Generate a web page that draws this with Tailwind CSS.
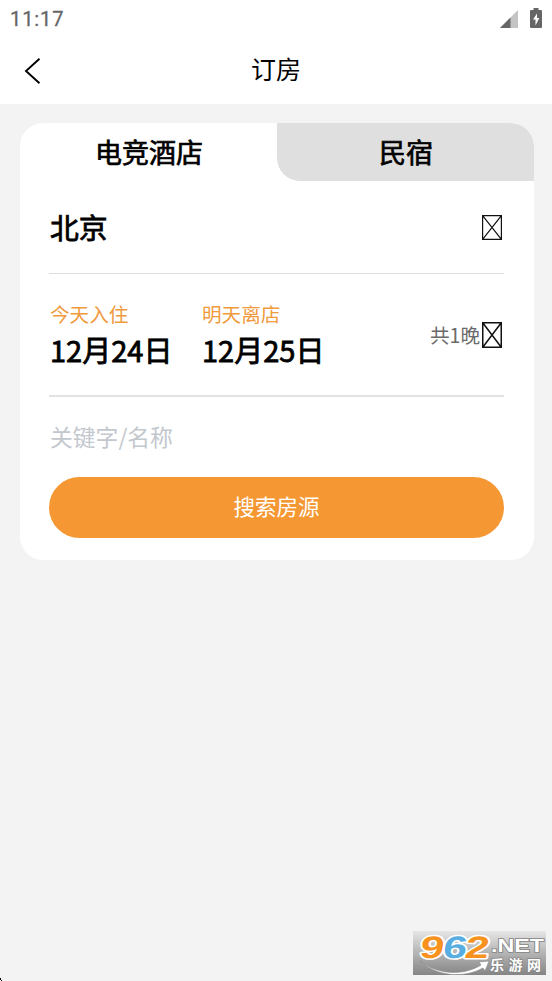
<!DOCTYPE html>
<html lang="zh-CN">
<head>
<meta charset="utf-8">
<title>订房</title>
<script src="https://cdn.jsdelivr.net/npm/@tailwindcss/browser@4"></script>
</head>
<body class="relative h-[981px] w-[552px] overflow-hidden bg-[#f3f3f3] font-['Noto_Sans_CJK_SC',sans-serif] text-black">
<header class="h-[104px] bg-white">
  <div class="flex h-[38px] items-center justify-between pl-[10px] pr-[10px]">
    <span class="font-['Roboto',sans-serif] text-[20px] font-normal tracking-[0.9px] text-[#666] [-webkit-text-stroke:0.3px_#666]">11:17</span>
    <div class="flex items-center gap-3">
      <svg class="-mt-[1px] h-[18px] w-[18px]" viewBox="0 0 18 18"><path d="M18 0V18H0Z" fill="#c4c4c4"/><path d="M10.500 7.500V18H0Z" fill="#666"/></svg>
      <svg class="-mt-[2px] h-[20px] w-[12px]" viewBox="0 0 12 20"><path d="M3.500 0h5v2H11a1 1 0 0 1 1 1v16a1 1 0 0 1-1 1H1a1 1 0 0 1-1-1V3a1 1 0 0 1 1-1h2.500Z" fill="#666"/><path d="M7 5.500 3 11.500H5.500V17.500L9.300 10H7Z" fill="#fff"/></svg>
    </div>
  </div>
  <div class="grid h-[63px] grid-cols-[40px_1fr_40px] items-center">
    <svg class="ml-6 mt-[3px] h-[28px] w-[18px]" viewBox="0 0 18 28" fill="none" stroke="#000" stroke-width="1.900"><path d="M15.500 1.700 2 14 15.500 26.300"/></svg>
    <h1 class="pb-[3px] text-center text-[25px] leading-[60px]">订房</h1>
  </div>
</header>
<main class="ml-5 mt-[19px] h-[437px] w-[514px] overflow-hidden rounded-[23px] bg-white">
  <div class="grid h-[58px] grid-cols-2 text-center text-[27px] leading-[57px] [-webkit-text-stroke:0.7px_#000]">
    <div class="pl-[1px]">电竞酒店</div>
    <div class="rounded-bl-[23px] rounded-tr-[23px] bg-[#dfdfdf] pl-[1px]">民宿</div>
  </div>
  <div class="pl-[29px] pr-[30px]">
    <div class="flex h-[93px] items-center justify-between border-b border-[#dfdfdf]">
      <span class="pb-[2px] pl-[1px] text-[28.8px] leading-[29px] [-webkit-text-stroke:0.8px_#000]">北京</span>
      <svg class="mr-[2px] h-[25px] w-[20px]" viewBox="0 0 20 25" fill="none" stroke="#111"><path stroke-width="1.200" d="M.6.600h18.800v23.800H.6ZM.6.600l18.800 23.800M19.400.600l-18.800 23.800"/></svg>
    </div>
    <div class="flex h-[123px] items-center border-b-2 border-[#e2e2e2] pl-[1px]">
      <div class="w-[152px] pb-[2px]">
        <div class="text-[19.6px] leading-[31px] text-[#f09a3e]">今天入住</div>
        <div class="text-[29px] leading-[40px] [-webkit-text-stroke:0.8px_#000]">12月24日</div>
      </div>
      <div class="pb-[2px]">
        <div class="text-[19.6px] leading-[31px] text-[#f09a3e]">明天离店</div>
        <div class="text-[29px] leading-[40px] [-webkit-text-stroke:0.8px_#000]">12月25日</div>
      </div>
      <div class="ml-auto flex items-center gap-[2px] pt-[1px]">
        <span class="text-[19.6px] leading-[24px] text-[#6b6b6b]">共1晚</span>
        <svg class="mr-[2px] h-[26px] w-[20px]" viewBox="0 0 20 26" fill="none" stroke="#111"><path stroke-width="1.500" d="M.75.750h18.500v24.500H.75ZM.75.750l18.500 24.500M19.250.750l-18.500 24.500"/></svg>
      </div>
    </div>
    <div class="h-[80px] pl-[1px] text-[22.8px] leading-[80px] text-[#c3c7ce]">关键字/名称</div>
    <button class="block h-[61px] w-[455px] rounded-full bg-[#f59833] text-center text-[21.5px] leading-[55px] text-white"><span class="relative -top-[2px]">搜索房源</span></button>
  </div>
</main>
<div class="absolute left-[413px] top-[931px] h-[44px] w-[133px] bg-linear-to-b from-[#e6e6e6] to-[#858585]">
  <svg class="block h-[44px] w-[133px]" viewBox="0 0 133 44">
    <path d="M7 30C24 44 51 45 68 34L66 31 76 30 72 40 70 37C50 48 23 45 7 30Z" fill="#fff" stroke="#888" stroke-width=".6"/>
    <g transform="translate(5 0) skewX(-9)" font-family="Liberation Sans, sans-serif" font-weight="700" font-size="31" stroke="#fff" stroke-width="3" stroke-linejoin="round" paint-order="stroke">
      <text x="5" y="27" textLength="24" lengthAdjust="spacingAndGlyphs" fill="#f7921e">9</text>
      <text x="28" y="27" textLength="24" lengthAdjust="spacingAndGlyphs" fill="#58aee0">6</text>
      <text x="50" y="27" textLength="24" lengthAdjust="spacingAndGlyphs" fill="#f7921e">2</text>
    </g>
    <g fill="#fff" stroke="#858585" stroke-width="1.500" paint-order="stroke" font-weight="700">
      <text x="78" y="21" textLength="53" lengthAdjust="spacingAndGlyphs" font-family="Liberation Sans, sans-serif" font-size="18">.NET</text>
      <text x="77" y="39" textLength="51" font-family="Noto Sans CJK SC, sans-serif" font-size="14">乐游网</text>
    </g>
  </svg>
</div>
<svg class="absolute bottom-0 left-0 h-[3px] w-[2px]" viewBox="0 0 2 3"><path d="M0 0h1v2h1v1H1V2H0Z" fill="#000"/></svg>
</body>
</html>
